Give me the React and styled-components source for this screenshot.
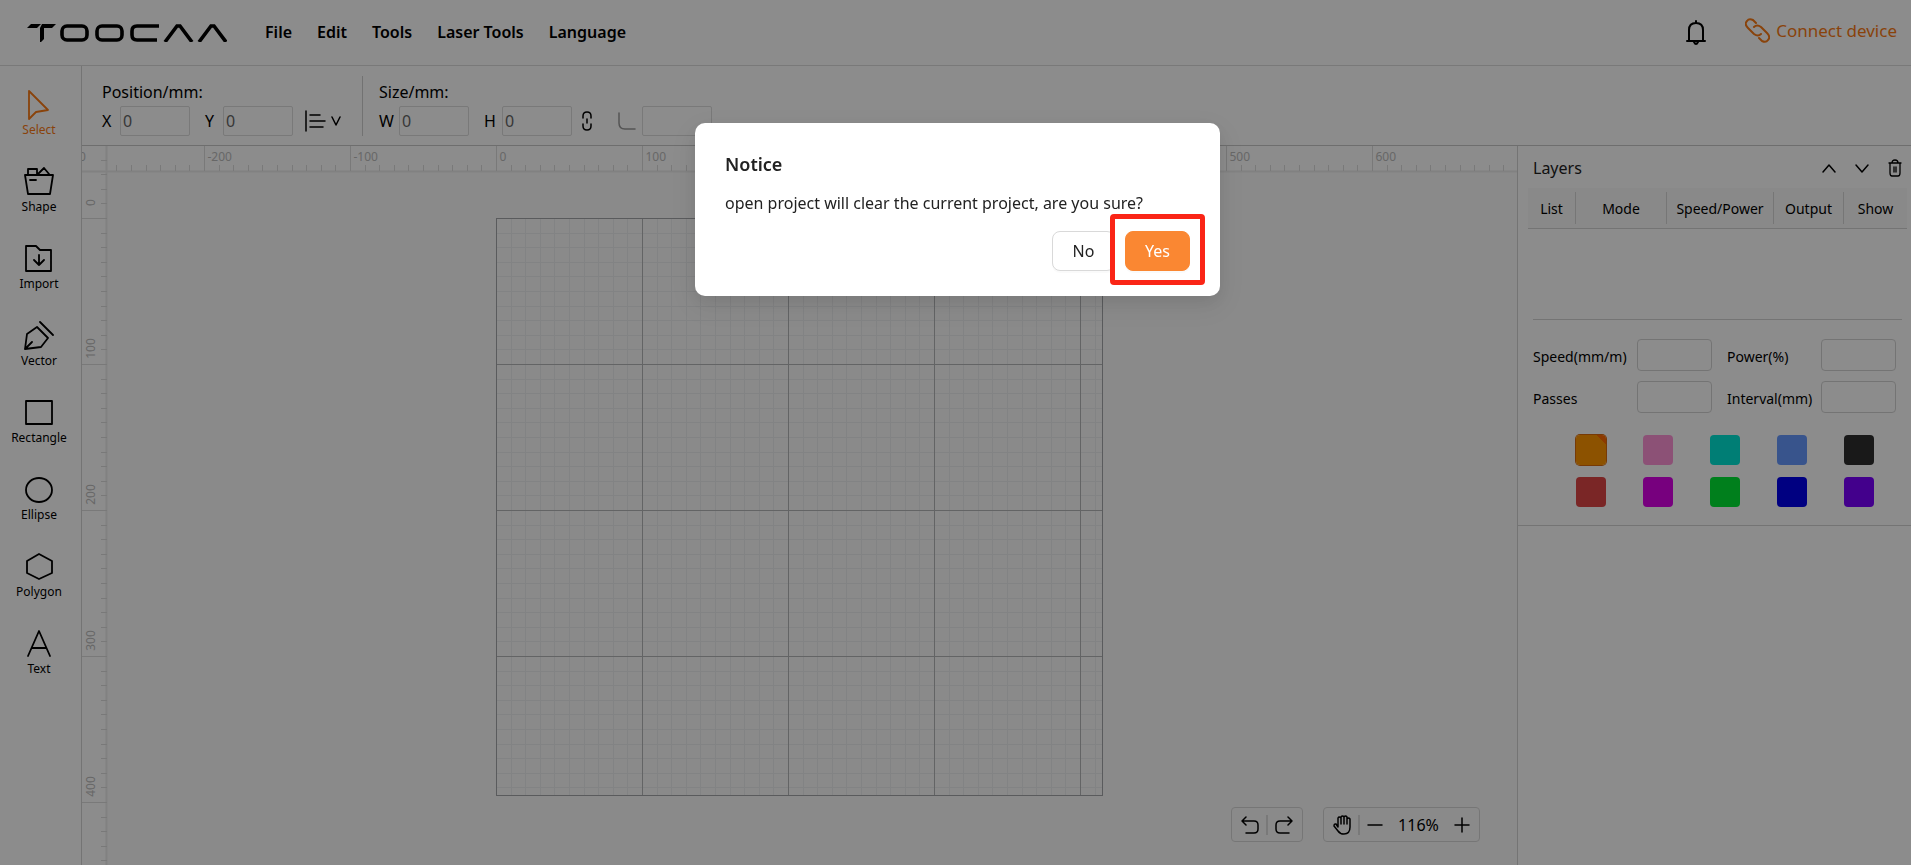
import React from 'react';
import styled, { createGlobalStyle } from 'styled-components';

const GlobalStyle = createGlobalStyle`
  * {
    box-sizing: border-box;
  }

  body {
    margin: 0;
    background: #fff;
    color: #000;
    font-family: 'Noto Sans', 'Open Sans', sans-serif;
    font-size: 16px;
    overflow: hidden;
  }

  button,
  input {
    font: inherit;
    color: inherit;
  }

  svg {
    display: block;
    flex: none;
  }
`;

const StyledPage = styled.div`
  display: flex;
  flex-direction: column;
  height: 100vh;
`;

const StyledHeader = styled.header`
  display: flex;
  align-items: center;
  height: 66px;
  padding: 0 14px 0 27px;
  border-bottom: 1px solid #dcdcdc;
`;

const StyledNav = styled.nav`
  display: flex;
  gap: 25px;
  margin: 0 auto 0 38px;
  padding-bottom: 2px;
`;

const PlainButton = styled.button`
  display: flex;
  align-items: center;
  justify-content: center;
  padding: 0;
  border: 0;
  background: none;
  cursor: pointer;
`;

const MenuButton = styled(PlainButton)`
  font-weight: 600;
  font-size: 16px;
  line-height: 24px;
`;

const ConnectLink = styled.a`
  display: flex;
  align-items: center;
  gap: 6px;
  margin-left: 39px;
  padding-bottom: 4px;
  color: #fa7a14;
  font-size: 17px;
  line-height: 24px;
  text-decoration: none;
`;

const StyledBody = styled.div`
  display: flex;
  flex: 1;
  min-height: 0;
`;

const StyledSidebar = styled.aside`
  display: flex;
  flex-direction: column;
  flex: none;
  gap: 21px;
  width: 82px;
  padding: 20px 3px 0 0;
  border-right: 1px solid #d4d4d4;
`;

const ToolButton = styled(PlainButton)`
  flex-direction: column;
  height: 56px;
  color: ${({ $active }) => ($active ? '#fa7a14' : '#000')};
  font-size: 12px;
  line-height: 18px;

  svg {
    margin-bottom: 1px;
  }
`;

const StyledMain = styled.div`
  display: flex;
  flex: 1;
  flex-direction: column;
  min-width: 0;
`;

const StyledToolbar = styled.div`
  display: flex;
  flex: none;
  height: 80px;
  padding: 10px 0 9px 20px;
  border-bottom: 1px solid #c8c8c8;
`;

const ToolbarGroup = styled.fieldset`
  display: flex;
  flex-direction: column;
  margin: 0;
  padding: 0;
  border: 0;

  & + & {
    margin-left: 21px;
    padding-left: 16px;
    border-left: 1px solid #cfcfcf;
  }
`;

const GroupTitle = styled.div`
  height: 30px;
  font-size: 16px;
  line-height: 32px;
`;

const GroupRow = styled.div`
  display: flex;
  align-items: center;
  height: 30px;
`;

const Field = styled.label`
  display: flex;
  align-items: center;
  justify-content: space-between;
  width: ${({ $wide }) => ($wide ? 90 : 88)}px;
  margin-right: ${({ $gap }) => $gap}px;
  line-height: 28px;
`;

const NumberInput = styled.input`
  width: 70px;
  height: 30px;
  padding: 0 2px;
  border: 1px solid #dcdcdc;
  border-radius: 2px;
  background: none;
  color: #666;
`;

const StyledCorner = styled.span`
  margin: 0 6px 0 26px;
  color: #999;
`;

const StyledContent = styled.div`
  display: flex;
  flex: 1;
  min-height: 0;
`;

const StyledStage = styled.main`
  position: relative;
  flex: 1;
  min-width: 0;
  background: #fcfcfc;
  overflow: hidden;

  text {
    fill: #bcbcbc;
    font-size: 12px;
  }
`;

const FloatingControls = styled.div`
  position: absolute;
  right: 37px;
  bottom: 23px;
  display: flex;
  gap: 20px;
`;

const ControlGroup = styled.div`
  display: flex;
  align-items: center;
  height: 35px;
  padding: 0 9px;
  border: 1px solid #d8d8d8;
  border-radius: 4px;
`;

const ControlDivider = styled.span`
  width: 2px;
  height: 20px;
  margin: 0 7px;
  background: #dcdcdc;
`;

const ZoomValue = styled.output`
  width: 71px;
  font-size: 16px;
  text-align: center;
`;

const StyledPanel = styled.aside`
  flex: none;
  width: 394px;
  border-left: 1px solid #d4d4d4;
`;

const PanelHeader = styled.div`
  display: flex;
  align-items: center;
  gap: 17px;
  height: 42px;
  padding: 2px 8px 0 15px;

  h2 {
    margin: 0 auto 0 0;
    color: #222;
    font-weight: 400;
    font-size: 16px;
  }
`;

const LayerTable = styled.table`
  width: 379px;
  margin-left: 10px;
  border-collapse: collapse;
  table-layout: fixed;
  background: #fafafa;
  border-bottom: 1px solid #d4d4d4;

  th {
    height: 40px;
    padding: 4px 0;
    font-weight: 400;
    font-size: 14px;
  }

  span {
    display: block;
    height: 32px;
    line-height: 34px;
  }

  th + th span {
    border-left: 1px solid #d8d8d8;
  }
`;

const LayerSettings = styled.div`
  display: grid;
  grid-template-columns: 104px 90px 94px 75px;
  row-gap: 10px;
  margin: 90px 9px 0 15px;
  padding-top: 19px;
  border-top: 1px solid #d4d4d4;
  font-size: 14px;
  line-height: 36px;

  input {
    width: 75px;
    height: 32px;
    padding: 0 8px;
    border: 1px solid #d4d4d4;
    border-radius: 4px;
    background: none;
  }

  label {
    height: 32px;
  }
`;

const Swatches = styled.div`
  display: grid;
  grid-template-columns: repeat(5, 30px);
  gap: 12px 37px;
  padding: 22px 0 18px 58px;
  border-bottom: 1px solid #d4d4d4;
`;

const Swatch = styled.button`
  width: 30px;
  height: 30px;
  padding: 0;
  border: 0;
  border-radius: 4px;
  background: ${({ $active, $color }) =>
    $active ? `linear-gradient(45deg, ${$color} 84%, #ff6a00 84%)` : $color};
  box-shadow: ${({ $active }) => ($active ? '0 0 0 1px #d96a0c' : 'none')};
`;

const Mask = styled.div`
  position: fixed;
  inset: 0;
  display: flex;
  align-items: flex-start;
  justify-content: center;
  padding: 123px 0 0 4px;
  background: rgba(0, 0, 0, 0.45);
`;

const StyledDialog = styled.div`
  width: 525px;
  padding: 28px 30px 25px;
  border-radius: 10px;
  background: #fff;
  box-shadow: 0 6px 16px rgba(0, 0, 0, 0.08), 0 9px 28px 8px rgba(0, 0, 0, 0.05);
  color: #222;

  h1 {
    margin: 0 0 14px;
    font-weight: 600;
    font-size: 18px;
    line-height: 26px;
  }

  p {
    margin: 0;
    font-size: 16px;
    line-height: 24px;
  }
`;

const DialogActions = styled.div`
  display: flex;
  justify-content: flex-end;
  gap: 10px;
  margin-top: 16px;
`;

const DialogButton = styled.button`
  width: ${({ $primary }) => ($primary ? 65 : 63)}px;
  height: 40px;
  padding: 0;
  border: 1px solid ${({ $primary }) => ($primary ? '#fa8732' : '#d9d9d9')};
  border-radius: 8px;
  background: ${({ $primary }) => ($primary ? '#fa8732' : '#fff')};
  color: ${({ $primary }) => ($primary ? '#fff' : '#222')};
  box-shadow: 0 2px 0 rgba(0, 0, 0, 0.02);
`;

const Highlighted = styled.span`
  position: relative;

  &:after {
    content: '';
    position: absolute;
    inset: -17px -15px -14px;
    border: 5px solid #fa2516;
    border-radius: 4px;
  }
`;

const Icon = ({ width = 24, height = 24, stroke = 1.5, children }) => (
  <svg
    width={width}
    height={height}
    viewBox={`0 0 ${width} ${height}`}
    fill="none"
    stroke="currentColor"
    strokeWidth={stroke}
    strokeLinecap="round"
    strokeLinejoin="round"
    aria-hidden="true"
  >
    {children}
  </svg>
);

const Logo = () => (
  <svg width="200" height="19" viewBox="0 0 200 19" role="img" aria-label="Toocaa">
    <path d="M4 1H14L10 5H0ZM15 1H29L25 5H17V16L13 20V5Z" fill="#000" />
    <g fill="none" stroke="#000" strokeWidth="3.6">
      <rect x="35" y="3" width="25" height="14" rx="5" />
      <rect x="70" y="3" width="25" height="14" rx="5" />
      <path d="M132 3H110Q105 3 105 8V12Q105 17 110 17H130" />
      <path d="M138 19L150 3H153L165 19M172 19L184 3H187L199 19" />
    </g>
  </svg>
);

const tools = [
  { name: 'Select', icon: <path d="M5 1V29L12 22L24 20Z" /> },
  { name: 'Shape', icon: <path d="M1 8H29L26 27H4ZM4 8V2H13V8M14 7L20 1L25 7M6 13H12" /> },
  { name: 'Import', icon: <path d="M2 2H12L16 6H27V27H2ZM15 11V21M10 16L15 21L20 16" /> },
  { name: 'Vector', icon: <path d="M1 28L3 13L13 6L24 17L17 26ZM1 28L8 21M16 1L29 14" /> },
  { name: 'Rectangle', icon: <rect x="2" y="3" width="26" height="23" /> },
  { name: 'Ellipse', icon: <ellipse cx="15" cy="15" rx="13" ry="12" /> },
  { name: 'Polygon', icon: <path d="M15 2L28 9V21L15 27L3 21V9Z" /> },
  { name: 'Text', icon: <path d="M4 27L15 2L26 27M8 19H22" /> },
];

const swatches = [
  '#ff9500',
  '#ff94d8',
  '#00e5d6',
  '#6699ff',
  '#2e2e2e',
  '#de4545',
  '#d900e6',
  '#00e833',
  '#0000eb',
  '#7a00ff',
];

const columns = [
  ['List', 47],
  ['Mode', 91],
  ['Speed/Power', 107],
  ['Output', 70],
  ['Show', 64],
];

// pixels on screen for ten millimetres
const STEP = 14.6;
const ORIGIN = { x: 414, y: 72 };
const BED = { width: 607, height: 577 };
const RULER = 25;

const range = (from, to) => Array.from({ length: to - from + 1 }, (_, i) => from + i);
const at = (origin, i) => Math.round(origin + i * STEP) + 0.5;

const Canvas = () => (
  <svg width="100%" height="100%">
    <rect width="100%" height={RULER} fill="#fff" />
    <rect width={RULER} height="100%" fill="#fff" />
    <path d={`M0 ${RULER + 0.5}H4000M${RULER - 0.5} 0V3000`} stroke="#ececec" strokeWidth="2" />
    <g stroke="#dcdcdc">
      {range(-26, 180).map(i => (
        <path key={i} d={`M${at(ORIGIN.x, i)} ${i % 10 ? 19 : 0}V${RULER}`} />
      ))}
      {range(-4, 120).map(i => (
        <path key={i} d={`M${i % 10 ? 19 : 0} ${at(ORIGIN.y, i)}H${RULER}`} />
      ))}
    </g>
    {range(-3, 6).map(i => (
      <text key={i} x={at(ORIGIN.x, i * 10) + 3} y="15">
        {i * 100}
      </text>
    ))}
    {range(0, 4).map(i => (
      <text
        key={i}
        textAnchor="middle"
        transform={`translate(13 ${at(ORIGIN.y, i * 10) - 16}) rotate(-90)`}
      >
        {i * 100}
      </text>
    ))}
    <g stroke="#edeef0">
      {range(1, 41).map(i => (
        <path key={i} d={`M${at(ORIGIN.x, i)} ${ORIGIN.y}v${BED.height}`} />
      ))}
      {range(1, 39).map(i => (
        <path key={i} d={`M${ORIGIN.x} ${at(ORIGIN.y, i)}h${BED.width}`} />
      ))}
    </g>
    <g stroke="#b4b6b8" fill="none">
      {range(1, 4).map(i => (
        <path key={i} d={`M${at(ORIGIN.x, i * 10)} ${ORIGIN.y}v${BED.height}`} />
      ))}
      {range(1, 3).map(i => (
        <path key={i} d={`M${ORIGIN.x} ${at(ORIGIN.y, i * 10)}h${BED.width}`} />
      ))}
      <rect
        x={ORIGIN.x + 0.5}
        y={ORIGIN.y + 0.5}
        width={BED.width - 1}
        height={BED.height}
        stroke="#a4a6aa"
      />
    </g>
  </svg>
);

const Header = () => (
  <StyledHeader>
    <Logo />
    <StyledNav>
      {['File', 'Edit', 'Tools', 'Laser Tools', 'Language'].map(item => (
        <MenuButton key={item}>{item}</MenuButton>
      ))}
    </StyledNav>
    <PlainButton aria-label="Notifications">
      <Icon width={20} height={26} stroke={2}>
        <path d="M1 21H19M3 21V10Q3 3 10 3Q17 3 17 10V21M10 1V3M8 22Q10 26 12 22" />
      </Icon>
    </PlainButton>
    <ConnectLink href="#connect">
      <Icon width={25} height={25} stroke={2}>
        <path d="M11 5L8 2Q4 0 2 3Q-1 6 3 10L9 16Q13 19 16 16M14 20L17 23Q21 25 23 22Q26 19 22 15L16 9Q12 6 9 9" />
      </Icon>
      Connect device
    </ConnectLink>
  </StyledHeader>
);

const Toolbar = () => (
  <StyledToolbar>
    <ToolbarGroup aria-label="Position">
      <GroupTitle>Position/mm:</GroupTitle>
      <GroupRow>
        <Field $gap={15}>
          X <NumberInput defaultValue="0" />
        </Field>
        <Field $gap={12}>
          Y <NumberInput defaultValue="0" />
        </Field>
        <PlainButton aria-label="Align">
          <Icon width={36} height={22}>
            <path d="M1 1V21M5 5H15M5 11H20M5 17H18M27 7L31 15L35 7" />
          </Icon>
        </PlainButton>
      </GroupRow>
    </ToolbarGroup>
    <ToolbarGroup aria-label="Size">
      <GroupTitle>Size/mm:</GroupTitle>
      <GroupRow>
        <Field $wide $gap={15}>
          W <NumberInput defaultValue="0" />
        </Field>
        <Field $gap={10}>
          H <NumberInput defaultValue="0" />
        </Field>
        <PlainButton aria-label="Lock ratio">
          <Icon width={10} height={20}>
            <path d="M1 7V5Q1 1 5 1Q9 1 9 5V7M1 13V15Q1 19 5 19Q9 19 9 15V13M5 8V12" />
          </Icon>
        </PlainButton>
        <StyledCorner>
          <Icon width={18} height={18}>
            <path d="M1 1V11Q1 17 7 17H17" />
          </Icon>
        </StyledCorner>
        <NumberInput aria-label="Corner radius" disabled />
      </GroupRow>
    </ToolbarGroup>
  </StyledToolbar>
);

const CanvasControls = () => (
  <FloatingControls>
    <ControlGroup>
      <PlainButton aria-label="Undo">
        <Icon width={18} height={18}>
          <path d="M5 1L1 5L5 9M1 5H13Q17 5 17 9V13Q17 17 13 17H5" />
        </Icon>
      </PlainButton>
      <ControlDivider />
      <PlainButton aria-label="Redo">
        <Icon width={18} height={18}>
          <path d="M13 1L17 5L13 9M17 5H5Q1 5 1 9V13Q1 17 5 17H14" />
        </Icon>
      </PlainButton>
    </ControlGroup>
    <ControlGroup>
      <PlainButton aria-label="Pan">
        <Icon width={18} height={20}>
          <path d="M5 12V3Q6 1 8 3V9M8 9V2Q9.5 0 11 2V9M11 9V2Q12.5 0 14 2V9M14 9V4Q15.5 2 17 4V12Q17 19 11 19Q7 19 5 16L1 11Q1 8.5 3 9L5 12" />
        </Icon>
      </PlainButton>
      <ControlDivider />
      <PlainButton aria-label="Zoom out">
        <Icon width={16} height={16}>
          <path d="M1 8H15" />
        </Icon>
      </PlainButton>
      <ZoomValue>116%</ZoomValue>
      <PlainButton aria-label="Zoom in">
        <Icon width={16} height={16}>
          <path d="M1 8H15M8 1V15" />
        </Icon>
      </PlainButton>
    </ControlGroup>
  </FloatingControls>
);

const LayersPanel = () => (
  <StyledPanel>
    <PanelHeader>
      <h2>Layers</h2>
      <PlainButton aria-label="Move up">
        <Icon width={16} height={16}>
          <path d="M2 12L8 5L14 12" />
        </Icon>
      </PlainButton>
      <PlainButton aria-label="Move down">
        <Icon width={16} height={16}>
          <path d="M2 5L8 12L14 5" />
        </Icon>
      </PlainButton>
      <PlainButton aria-label="Delete layer">
        <Icon width={16} height={18} stroke={1.3}>
          <path d="M2 4H14M5 4Q5 1 8 1Q11 1 11 4M3 4V14Q3 17 5 17H11Q13 17 13 14V4M7 8V13M9 8V13" />
        </Icon>
      </PlainButton>
    </PanelHeader>
    <LayerTable>
      <colgroup>
        {columns.map(([name, width]) => (
          <col key={name} width={width} />
        ))}
      </colgroup>
      <thead>
        <tr>
          {columns.map(([name]) => (
            <th key={name} scope="col">
              <span>{name}</span>
            </th>
          ))}
        </tr>
      </thead>
    </LayerTable>
    <LayerSettings>
      {['Speed(mm/m)', 'Power(%)', 'Passes', 'Interval(mm)'].map(name => (
        <React.Fragment key={name}>
          <label htmlFor={name}>{name}</label>
          <input id={name} />
        </React.Fragment>
      ))}
    </LayerSettings>
    <Swatches>
      {swatches.map((color, i) => (
        <Swatch key={color} $color={color} $active={i === 0} aria-label={`Layer colour ${i + 1}`} />
      ))}
    </Swatches>
  </StyledPanel>
);

const NoticeDialog = () => (
  <Mask>
    <StyledDialog role="dialog" aria-modal="true" aria-labelledby="notice-title">
      <h1 id="notice-title">Notice</h1>
      <p>open project will clear the current project, are you sure?</p>
      <DialogActions>
        <DialogButton>No</DialogButton>
        <Highlighted>
          <DialogButton $primary>Yes</DialogButton>
        </Highlighted>
      </DialogActions>
    </StyledDialog>
  </Mask>
);

const App = () => (
  <StyledPage>
    <GlobalStyle />
    <Header />
    <StyledBody>
      <StyledSidebar>
        {tools.map(({ name, icon }, i) => (
          <ToolButton key={name} $active={i === 0}>
            <Icon width={30} height={30} stroke={1.8}>
              {icon}
            </Icon>
            {name}
          </ToolButton>
        ))}
      </StyledSidebar>
      <StyledMain>
        <Toolbar />
        <StyledContent>
          <StyledStage>
            <Canvas />
            <CanvasControls />
          </StyledStage>
          <LayersPanel />
        </StyledContent>
      </StyledMain>
    </StyledBody>
    <NoticeDialog />
  </StyledPage>
);

export default App;
